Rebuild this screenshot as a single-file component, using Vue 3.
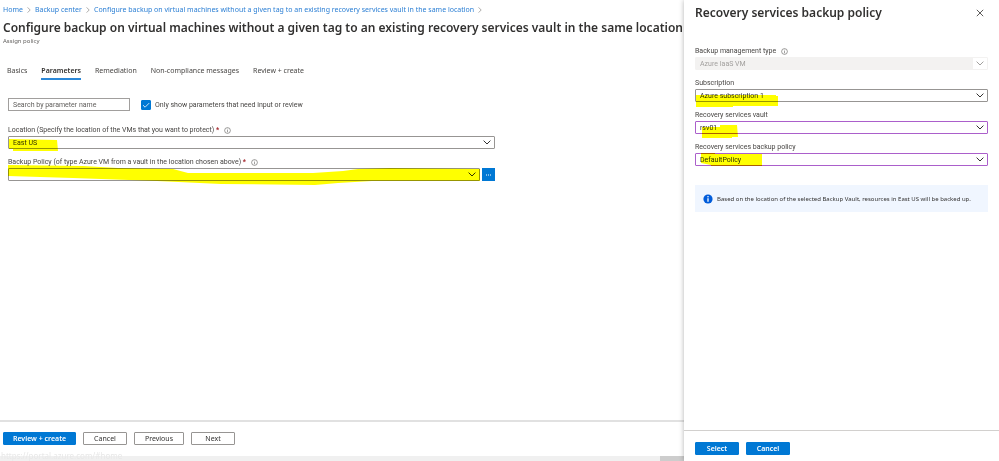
<script setup>
import { ref } from 'vue'

const crumbs = [
  'Home',
  'Backup center',
  'Configure backup on virtual machines without a given tag to an existing recovery services vault in the same location'
]
const tabs = ['Basics', 'Parameters', 'Remediation', 'Non-compliance messages', 'Review + create']

const activeTab = ref('Parameters')
const search = ref('')
const onlyRequired = ref(true)
const location = ref('East US')
const backupPolicy = ref('')

const panelFields = ref([
  { id: 'type', label: 'Backup management type', value: 'Azure IaaS VM', info: true, state: 'disabled' },
  { id: 'subscription', label: 'Subscription', value: 'Azure subscription 1', mark: '0,0 80,0 80,1 82,1 82,11 37,11 37,12 0,12' },
  { id: 'vault', label: 'Recovery services vault', value: 'rsv01', state: 'edited', mark: '0,2 18,2 18,0 35,0 36,12 30,12 30,13 0,13' },
  { id: 'policy', label: 'Recovery services backup policy', value: 'DefaultPolicy', state: 'edited', mark: '0,0 14,0 14,1 61,1 61,13 10,13 10,12 0,10' }
])
</script>

<template>
  <div class="portal">
    <main class="blade">
      <nav class="crumbs">
        <template v-for="crumb in crumbs" :key="crumb">
          <a href="#">{{ crumb }}</a>
          <svg class="crumb-sep" viewBox="0 0 4 6"><path d="M.6.4 3.2 3 .6 5.6" /></svg>
        </template>
      </nav>
      <h1>{{ crumbs[2] }}</h1>
      <p class="subtitle">Assign policy</p>

      <div class="tabs">
        <button
          v-for="tab in tabs"
          :key="tab"
          type="button"
          :class="['tab', { active: activeTab === tab }]"
          @click="activeTab = tab"
        >
          {{ tab }}
        </button>
      </div>

      <div class="form">
        <div class="filters">
          <input v-model="search" class="search" type="text" placeholder="Search by parameter name" aria-label="Search by parameter name" />
          <label class="check">
            <input v-model="onlyRequired" type="checkbox" />
            <svg viewBox="0 0 10 10"><path d="M2 5.2 4.1 7.2 8.2 3.1" /></svg>
            <span>Only show parameters that need input or review</span>
          </label>
        </div>

        <div class="field">
          <div class="label-row">
            <label for="location">Location (Specify the location of the VMs that you want to protect) <b>*</b></label>
            <svg class="info" viewBox="0 0 8 8"><circle cx="4" cy="4" r="3.3" /><path d="M4 3.5V6M4 2v.8" /></svg>
          </div>
          <div class="select-box">
            <select id="location" v-model="location">
              <option>East US</option>
            </select>
            <svg class="chevron" viewBox="0 0 8 5"><path d="M.6.6 4 4 7.4.6" /></svg>
            <svg class="mark mark-location" viewBox="0 0 49 12"><polygon points="0,0 48,1 49,12 4,12 4,10 0,10" /></svg>
          </div>
        </div>

        <div class="field">
          <div class="label-row">
            <label for="backup-policy">Backup Policy (of type Azure VM from a vault in the location chosen above) <b>*</b></label>
            <svg class="info" viewBox="0 0 8 8"><circle cx="4" cy="4" r="3.3" /><path d="M4 3.5V6M4 2v.8" /></svg>
          </div>
          <div class="policy-row">
            <div class="select-box">
              <select id="backup-policy" v-model="backupPolicy">
                <option value=""></option>
              </select>
              <svg class="chevron" viewBox="0 0 8 5"><path d="M.6.6 4 4 7.4.6" /></svg>
              <svg class="mark mark-line" viewBox="0 0 472 20" preserveAspectRatio="none">
                <polygon points="0,0 75,1 110,3 165,4 180,8 305,8 335,6 350,4 382,3 472,4 472,16 364,16 330,18 307,20 213,19 149,16 65,13 0,11" />
              </svg>
            </div>
            <button type="button" class="more" aria-label="Choose policy">
              <svg viewBox="0 0 7 2"><path d="M1 1h1M3 1h1M5 1h1" /></svg>
            </button>
          </div>
        </div>
      </div>

      <footer class="blade-footer">
        <button type="button" class="btn primary review">Review + create</button>
        <button type="button" class="btn">Cancel</button>
        <button type="button" class="btn previous">Previous</button>
        <button type="button" class="btn">Next</button>
      </footer>
      <div class="scrollbar">
        <span>https://portal.azure.com/#home</span>
        <i></i>
      </div>
    </main>

    <aside class="panel">
      <header>
        <h2>Recovery services backup policy</h2>
        <button type="button" class="close" aria-label="Close">
          <svg viewBox="0 0 8 8"><path d="M.8.8l6.4 6.4M7.2.8.8 7.2" /></svg>
        </button>
      </header>

      <div class="panel-body">
        <div v-for="field in panelFields" :key="field.id" class="field">
          <div class="label-row">
            <label :for="field.id">{{ field.label }}</label>
            <svg v-if="field.info" class="info" viewBox="0 0 8 8"><circle cx="4" cy="4" r="3.3" /><path d="M4 3.5V6M4 2v.8" /></svg>
          </div>
          <div :class="['select-box', field.state]">
            <select :id="field.id" v-model="field.value" :disabled="field.state === 'disabled'">
              <option>{{ field.value }}</option>
            </select>
            <svg class="chevron" viewBox="0 0 8 5"><path d="M.6.6 4 4 7.4.6" /></svg>
            <svg v-if="field.mark" :class="['mark', 'mark-' + field.id]" viewBox="0 0 82 13"><polygon :points="field.mark" /></svg>
          </div>
        </div>

        <div class="notice">
          <svg viewBox="0 0 10 10">
            <circle cx="5" cy="5" r="4.6" fill="#015cda" />
            <circle cx="5" cy="2.7" r=".8" fill="#fff" />
            <path d="M5 4.3v3.5" stroke="#fff" stroke-width="1.3" />
          </svg>
          <span>Based on the location of the selected Backup Vault, resources in East US will be backed up.</span>
        </div>
      </div>

      <footer class="panel-footer">
        <button type="button" class="btn primary">Select</button>
        <button type="button" class="btn primary">Cancel</button>
      </footer>
    </aside>
  </div>
</template>

<style>
body {
  margin: 0;
  background: #fff;
}
</style>

<style scoped>
.portal {
  display: flex;
  min-height: 100vh;
  font-family: "Noto Sans", "Open Sans", sans-serif;
  font-size: 7px;
  line-height: 10px;
  color: #484644;
}

.portal *,
.portal {
  box-sizing: border-box;
}

.form,
.panel-body {
  font-family: Roboto, "Noto Sans", sans-serif;
}

button,
input,
select {
  margin: 0;
  font: inherit;
  color: inherit;
}

svg {
  display: block;
  flex: none;
  fill: none;
}

.blade {
  position: relative;
  flex: 1;
  min-width: 0;
  display: flex;
  flex-direction: column;
  overflow: hidden;
}

.crumbs {
  display: flex;
  align-items: center;
  gap: 4px;
  padding: 5px 3px 0;
  white-space: nowrap;
}

.crumbs a {
  color: #2b7fd4;
  text-decoration: none;
}

.crumb-sep {
  width: 4px;
  height: 6px;
  stroke: #8a8886;
  stroke-width: 0.7;
}

h1,
h2 {
  margin: 0;
  font-weight: 600;
  color: #323130;
  white-space: nowrap;
}

h1 {
  padding: 4px 0 0 3px;
  font-size: 12px;
  line-height: 18px;
}

.subtitle {
  margin: 0;
  padding-left: 3px;
  font-size: 6px;
  line-height: 8px;
  color: #605e5c;
}

.tabs {
  display: flex;
  gap: 14px;
  padding: 21px 7px 0;
}

.tab {
  padding: 0 0 2px;
  border: 0;
  border-bottom: 2px solid transparent;
  background: none;
  white-space: nowrap;
}

.tab.active {
  border-color: #2b88d8;
  font-weight: 600;
  color: #323130;
}

.form {
  flex: 1;
  max-width: 503px;
  padding: 18px 8px 0;
}

.filters {
  display: flex;
  align-items: center;
  gap: 11px;
  margin-bottom: 14px;
}

.search {
  width: 122px;
  height: 13px;
  padding: 0 4px;
  border: 1px solid #a19f9d;
}

.search::placeholder {
  color: #605e5c;
  opacity: 1;
}

.check {
  display: flex;
  align-items: center;
  gap: 4px;
  position: relative;
}

.check input {
  appearance: none;
  width: 10px;
  height: 10px;
  border: 1px solid #605e5c;
  border-radius: 1px;
}

.check input:checked {
  border-color: #0078d4;
  background: #0078d4;
}

.check svg {
  position: absolute;
  left: 0;
  top: 0;
  width: 10px;
  height: 10px;
  stroke: #fff;
  stroke-width: 0.8;
  pointer-events: none;
}

.field {
  margin-bottom: 8px;
}

.label-row {
  display: flex;
  align-items: center;
  gap: 5px;
  margin-bottom: 1px;
  white-space: nowrap;
}

.label-row b {
  color: #a4262c;
}

.info {
  width: 7px;
  height: 7px;
  stroke: #605e5c;
  stroke-width: 0.7;
}

.select-box {
  position: relative;
  flex: 1;
}

.select-box select {
  display: block;
  appearance: none;
  width: 100%;
  height: 13px;
  padding: 0 4px;
  border: 1px solid #979593;
  border-radius: 1px;
  background: #fff;
  color: #323130;
}

.select-box.edited select {
  border-color: #ab5fcb;
}

.select-box.disabled select {
  border-color: #f3f2f1;
  background: linear-gradient(to left, #fff 14px, #f3f2f1 14px);
  color: #a19f9d;
  opacity: 1;
}

.chevron {
  position: absolute;
  right: 4px;
  top: 4px;
  width: 8px;
  height: 5px;
  stroke: #323130;
  pointer-events: none;
}

.disabled .chevron {
  stroke: #a19f9d;
}

/* highlighter strokes drawn over the fields */
.mark {
  position: absolute;
  width: 82px;
  height: 13px;
  fill: #ff0;
  mix-blend-mode: multiply;
  pointer-events: none;
}

.mark-location {
  left: 1px;
  top: 3px;
  width: 49px;
  height: 12px;
}

.mark-line {
  left: 0;
  top: -3px;
  width: 100%;
  height: 20px;
}

.mark-subscription {
  left: 1px;
  top: 6px;
}

.mark-vault {
  left: 7px;
  top: 4px;
}

.mark-policy {
  left: 6px;
  top: 0;
}

.policy-row {
  display: flex;
  gap: 2px;
}

.more {
  display: flex;
  align-items: center;
  justify-content: center;
  width: 13px;
  height: 13px;
  padding: 0;
  border: 0;
  background: #0078d4;
}

.more svg {
  width: 7px;
  height: 2px;
  stroke: #fff;
}

.btn {
  width: 44px;
  height: 13px;
  padding: 0;
  border: 1px solid #979593;
  border-radius: 1px;
  background: #fff;
  line-height: 10px;
  color: #323130;
  white-space: nowrap;
}

.btn.primary {
  border-color: #0078d4;
  background: #0078d4;
  font-weight: 600;
  color: #fff;
}

.btn.review {
  width: 73px;
}

.btn.previous {
  width: 50px;
}

.blade-footer {
  display: flex;
  gap: 7px;
  padding: 10px 3px 11px;
  border-top: 2px solid #e1e1e1;
}

.scrollbar {
  display: flex;
  justify-content: flex-end;
  height: 5px;
  background: #f0f0f0;
}

.scrollbar span {
  position: absolute;
  left: 1px;
  bottom: 0;
  font-size: 8px;
  line-height: 10px;
  color: #e8e8e8;
}

.scrollbar i {
  width: 24px;
  background: #cdcdcd;
}

.panel {
  flex: 0 0 315px;
  display: flex;
  flex-direction: column;
  z-index: 1;
  background: #fff;
  box-shadow: 0 0 5px rgba(0, 0, 0, 0.3);
}

.panel header {
  display: flex;
  align-items: center;
  justify-content: space-between;
  padding: 4px 15px 0 11px;
}

h2 {
  font-size: 12px;
  line-height: 18px;
}

.close {
  padding: 0;
  border: 0;
  background: none;
}

.close svg {
  width: 8px;
  height: 8px;
  stroke: #323130;
  stroke-width: 0.8;
}

.panel-body {
  flex: 1;
  padding: 24px 11px 0;
}

.notice {
  display: flex;
  align-items: center;
  gap: 4px;
  min-height: 27px;
  margin-top: 19px;
  padding: 0 8px;
  background: #f0f6ff;
  font-family: "Noto Sans", "Open Sans", sans-serif;
  font-size: 6px;
  color: #323130;
}

.notice svg {
  width: 10px;
  height: 10px;
}

.panel-footer {
  display: flex;
  gap: 7px;
  padding: 11px 11px 6px;
  border-top: 1px solid #d2d0ce;
}
</style>
